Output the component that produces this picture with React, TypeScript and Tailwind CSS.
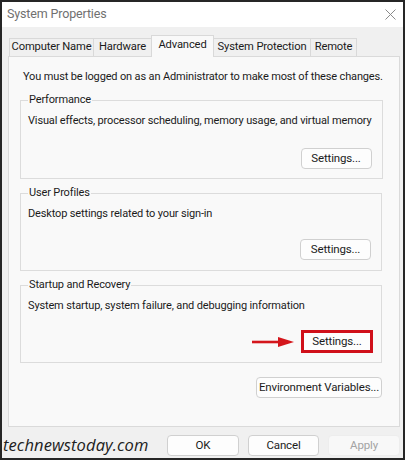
import React from 'react';

const tabs = [
  { label: 'Computer Name', w: 'w-[85px]' },
  { label: 'Hardware', w: 'w-[59px]' },
  { label: 'Advanced', w: 'w-[63px]', active: true },
  { label: 'System Protection', w: 'w-[98px]' },
  { label: 'Remote', w: 'w-[47px]' },
];

const WinButton: React.FC<{ children: React.ReactNode; className?: string }> = ({ children, className = '' }) => (
  <button
    className={`h-[21px] rounded-[4px] border border-[#d0d0d0] bg-[#fdfdfd] text-[11.5px] leading-none text-[#1b1b1b] flex items-center justify-center ${className}`}
  >
    {children}
  </button>
);

const Group: React.FC<{ title: string; desc: string; children: React.ReactNode; className?: string }> = ({
  title,
  desc,
  children,
  className = '',
}) => (
  <fieldset className={`ml-[11px] w-[362px] border border-[#dcdcdc] pl-[7px] pr-[10px] ${className}`}>
    <legend className="px-[1px] leading-[16px]">{title}</legend>
    <div className="mt-[5px] leading-[16px] whitespace-nowrap">{desc}</div>
    {children}
  </fieldset>
);

export default function App() {
  return (
    <div className="w-[405px] h-[460px] border-2 border-[#262626] flex flex-col bg-[#f0f0f0] font-['Roboto',sans-serif] text-[11px] tracking-[-0.15px] text-[#1b1b1b] overflow-hidden">
      {/* title bar */}
      <div className="h-[25px] shrink-0 bg-white flex items-center justify-between pl-[5px] pr-[6px]">
        <span className="text-[12.5px] text-[#707070]">System Properties</span>
        <svg width="11" height="11" viewBox="0 0 11 11" className="mr-[1px]">
          <path d="M0.5 0.5 L10.5 10.5 M10.5 0.5 L0.5 10.5" stroke="#8a8a8a" strokeWidth="1" />
        </svg>
      </div>

      <div className="flex-1 flex flex-col pl-[6px]">
        {/* tabs */}
        <div className="mt-[8px] h-[21px] flex items-end pl-[1px] text-[11.2px]">
          {tabs.map((t) =>
            t.active ? (
              <div
                key={t.label}
                className={`${t.w} h-[22px] -mb-px -ml-px relative z-10 border border-b-0 border-[#d9d9d9] bg-[#f9f9f9] flex items-center justify-center pb-[2px]`}
              >
                {t.label}
              </div>
            ) : (
              <div
                key={t.label}
                className={`${t.w} h-[18px] -ml-px first:ml-0 border border-b-0 border-[#d9d9d9] bg-[#f0f0f0] flex items-center justify-center`}
              >
                {t.label}
              </div>
            )
          )}
        </div>

        {/* panel */}
        <div className="w-[392px] h-[371px] border border-[#dadada] bg-[#f9f9f9] pt-[12px]">
          <div className="pl-[14px] leading-[16px] whitespace-nowrap">
            You must be logged on as an Administrator to make most of these changes.
          </div>

          <Group title="Performance" desc="Visual effects, processor scheduling, memory usage, and virtual memory" className="mt-[7px] pb-[9px]">
            <div className="mt-[19px] flex justify-end">
              <WinButton className="w-[71px]">Settings...</WinButton>
            </div>
          </Group>

          <Group title="User Profiles" desc="Desktop settings related to your sign-in" className="mt-[6px] pb-[10px]">
            <div className="mt-[17px] flex justify-end">
              <WinButton className="w-[71px]">Settings...</WinButton>
            </div>
          </Group>

          <Group title="Startup and Recovery" desc="System startup, system failure, and debugging information" className="mt-[6px] pb-[9px]">
            <div className="mt-[16px] flex justify-end items-center gap-[6px] -mr-[2px]">
              <svg width="43" height="12" viewBox="0 0 43 12">
                <path d="M0 6 H30" stroke="#d4161c" strokeWidth="2.6" />
                <path d="M26 1 L42 6 L26 11 Z" fill="#d4161c" />
              </svg>
              <button className="w-[72px] h-[23px] border-[3px] border-[#d0101a] bg-[#fdfdfd] text-[11.5px] leading-none text-[#1b1b1b] flex items-center justify-center">
                Settings...
              </button>
            </div>
          </Group>

          <div className="ml-[11px] w-[362px] mt-[14px] flex justify-end">
            <WinButton className="w-[126px]">Environment Variables...</WinButton>
          </div>
        </div>

        {/* footer */}
        <div className="mt-[8px] flex items-center pr-[3px]">
          <span className="-ml-[5px] font-['Open_Sans',sans-serif] italic font-medium text-[16.5px] tracking-[0.1px] text-[#202020] leading-none">
            technewstoday.com
          </span>
          <div className="ml-auto flex gap-[9px]">
            <WinButton className="w-[72px]">OK</WinButton>
            <WinButton className="w-[71px]">Cancel</WinButton>
            <button className="w-[72px] h-[21px] rounded-[4px] border border-[#ededed] bg-[#f8f8f8] text-[11.5px] leading-none text-[#a3a3a3] flex items-center justify-center">
              Apply
            </button>
          </div>
        </div>
      </div>
    </div>
  );
}
